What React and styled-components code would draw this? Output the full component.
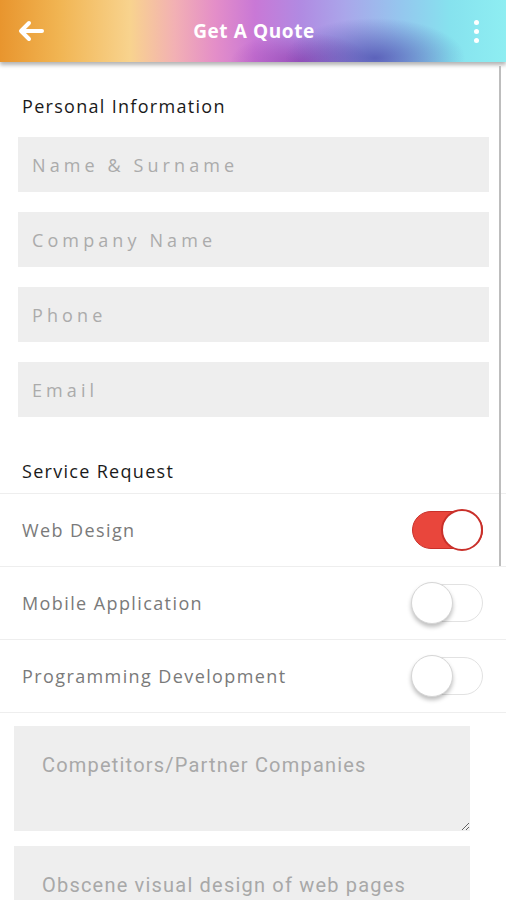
import React, { useState } from 'react';
import styled, { createGlobalStyle } from 'styled-components';

const GlobalStyle = createGlobalStyle`
  html, body {
    margin: 0;
    padding: 0;
    background: #ffffff;
    font-family: 'Open Sans', 'Noto Sans', sans-serif;
  }
  * {
    box-sizing: border-box;
  }
`;

const Screen = styled.div`
  position: relative;
  width: 506px;
  height: 900px;
  overflow: hidden;
  background: #ffffff;
`;

const Header = styled.header`
  position: relative;
  z-index: 2;
  display: flex;
  align-items: center;
  justify-content: space-between;
  height: 62px;
  padding: 0 14px 0 16px;
  background:
    radial-gradient(ellipse 90px 40px at 375px 58px, rgba(70, 70, 170, 0.75), rgba(70, 70, 170, 0) 100%),
    radial-gradient(ellipse 70px 30px at 300px 62px, rgba(140, 40, 160, 0.6), rgba(140, 40, 160, 0) 100%),
    linear-gradient(
      90deg,
      #e8952e 0px,
      #f1b553 60px,
      #f8d38e 130px,
      #f2b0b4 175px,
      #e48ec8 215px,
      #c978d6 255px,
      #b18ae2 300px,
      #aaa6ea 345px,
      #95c6ee 400px,
      #86e2ee 450px,
      #8eeef2 506px
    );
  box-shadow: 0 3px 4px rgba(0, 0, 0, 0.3);
`;

const IconButton = styled.button`
  display: flex;
  align-items: center;
  justify-content: center;
  width: 30px;
  height: 30px;
  padding: 0;
  border: 0;
  background: transparent;
  color: #ffffff;
`;

const Title = styled.h1`
  margin: 0;
  font-family: 'Open Sans', sans-serif;
  font-size: 19px;
  font-weight: 700;
  color: #ffffff;
  letter-spacing: 0.6px;
`;

const Dots = styled.div`
  display: flex;
  flex-direction: column;
  gap: 4px;
  span {
    width: 5px;
    height: 5px;
    border-radius: 50%;
    background: #ffffff;
  }
`;

const ScrollThumb = styled.div`
  position: absolute;
  right: 5px;
  top: 66px;
  width: 2px;
  height: 500px;
  background: #bdbdbd;
  z-index: 3;
`;

const Section = styled.section`
  display: flex;
  flex-direction: column;
  gap: 20px;
  padding: 0 17px 0 18px;
`;

const SectionTitle = styled.h2`
  margin: 0;
  padding: ${props => props.$pad};
  font-family: 'Open Sans', sans-serif;
  font-size: 18px;
  font-weight: 400;
  letter-spacing: 1.3px;
  color: #1a1a1a;
`;

const Field = styled.input`
  height: 55px;
  width: 100%;
  padding: 0 14px;
  border: 0;
  outline: none;
  background: #eeeeee;
  font-family: 'Open Sans', sans-serif;
  font-size: 18px;
  letter-spacing: 4.1px;
  color: #333;
  &::placeholder {
    color: #ababab;
  }
`;

const ToggleList = styled.div`
  display: flex;
  flex-direction: column;
  border-top: 1px solid #eeeeee;
`;

const ToggleRow = styled.label`
  display: flex;
  align-items: center;
  justify-content: space-between;
  height: 73px;
  padding: 0 22px;
  border-bottom: 1px solid #eeeeee;
`;

const RowLabel = styled.span`
  font-family: 'Open Sans', sans-serif;
  font-size: 18px;
  letter-spacing: 1.4px;
  color: #7a7a7a;
`;

const Track = styled.span`
  position: relative;
  display: flex;
  align-items: center;
  justify-content: ${props => (props.$on ? 'flex-end' : 'flex-start')};
  width: 71px;
  height: 38px;
  margin-right: 1px;
  border-radius: 19px;
  background: ${props => (props.$on ? '#e9463c' : '#ffffff')};
  border: 1px solid ${props => (props.$on ? '#c9302a' : '#e2e2e2')};
`;

const Knob = styled.span`
  width: 42px;
  height: 42px;
  margin: 0 ${props => (props.$on ? '-1px' : '-2px')};
  border-radius: 50%;
  background: #ffffff;
  border: ${props => (props.$on ? '2px solid #c9302a' : '1px solid #d6d6d6')};
  box-shadow: ${props => (props.$on ? 'none' : '0 3px 4px rgba(0,0,0,0.25)')};
`;

const Notes = styled.div`
  display: flex;
  flex-direction: column;
  gap: 15px;
  padding: 13px 36px 0 14px;
`;

const Note = styled.textarea`
  display: block;
  width: 100%;
  height: 105px;
  padding: 28px 28px;
  border: 0;
  outline: none;
  resize: vertical;
  background: #eeeeee;
  font-family: Roboto, sans-serif;
  font-size: 20px;
  line-height: 23px;
  letter-spacing: 1.2px;
  color: #333;
  &::placeholder {
    color: #a8a8a8;
  }
`;

const Toggle = ({ label, on, onChange }) => (
  <ToggleRow onClick={onChange}>
    <RowLabel>{label}</RowLabel>
    <Track $on={on}>
      <Knob $on={on} />
    </Track>
  </ToggleRow>
);

const App = () => {
  const [services, setServices] = useState({
    web: true,
    mobile: false,
    dev: false,
  });

  const flip = key => () => setServices(s => ({ ...s, [key]: !s[key] }));

  return (
    <Screen>
      <GlobalStyle />
      <Header>
        <IconButton aria-label="Back">
          <svg width="26" height="22" viewBox="0 0 26 22" fill="none">
            <path
              d="M24 11H4M11 3L3 11l8 8"
              stroke="#fff"
              strokeWidth="4"
              strokeLinecap="round"
              strokeLinejoin="round"
            />
          </svg>
        </IconButton>
        <Title>Get A Quote</Title>
        <IconButton aria-label="More">
          <Dots>
            <span />
            <span />
            <span />
          </Dots>
        </IconButton>
      </Header>
      <ScrollThumb />

      <SectionTitle $pad="32px 22px 19px">Personal Information</SectionTitle>
      <Section>
        <Field placeholder="Name & Surname" />
        <Field placeholder="Company Name" />
        <Field placeholder="Phone" />
        <Field placeholder="Email" />
      </Section>

      <SectionTitle $pad="42px 22px 10px">Service Request</SectionTitle>
      <ToggleList>
        <Toggle label="Web Design" on={services.web} onChange={flip('web')} />
        <Toggle label="Mobile Application" on={services.mobile} onChange={flip('mobile')} />
        <Toggle label="Programming Development" on={services.dev} onChange={flip('dev')} />
      </ToggleList>

      <Notes>
        <Note placeholder="Competitors/Partner Companies" />
        <Note placeholder="Obscene visual design of web pages" />
      </Notes>
    </Screen>
  );
};

export default App;
